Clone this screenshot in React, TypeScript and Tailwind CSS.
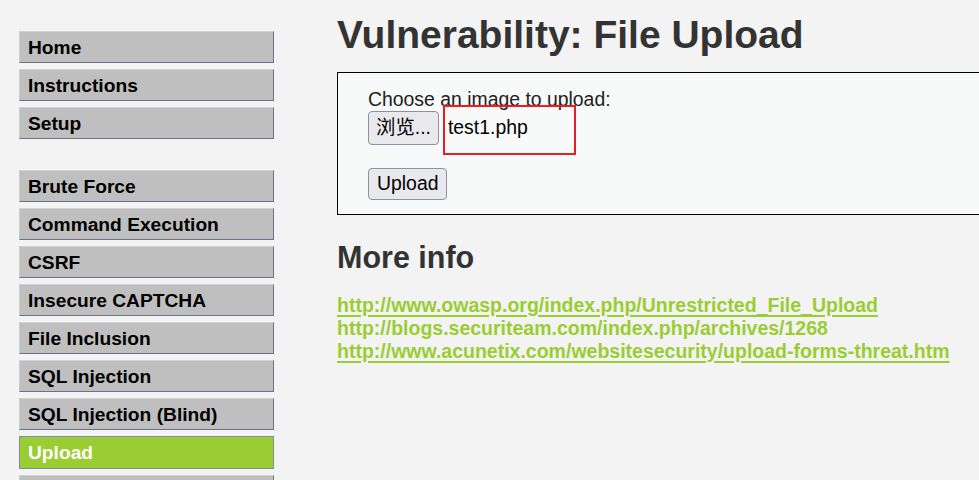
const groupOne = ["Home", "Instructions", "Setup"]
const groupTwo = [
  "Brute Force",
  "Command Execution",
  "CSRF",
  "Insecure CAPTCHA",
  "File Inclusion",
  "SQL Injection",
  "SQL Injection (Blind)",
  "Upload",
  "",
]

function MenuItem({ label, active }: { label: string; active?: boolean }) {
  if (active) {
    return (
      <div className="h-[33px] flex items-center pl-[8px] pt-[1px] border border-[#7f8ca6] bg-[#9acd32] text-white font-bold text-[19.2px] shrink-0">
        {label}
      </div>
    )
  }
  return (
    <div className="h-[32px] flex items-center pl-[8px] pt-[2px] border-t border-l border-t-[#d2d2d2] border-l-[#cacaca] border-b border-r border-b-[#6b7282] border-r-[#6b7282] bg-[#bfbfbf] text-black font-bold text-[19.2px] shrink-0">
      {label}
    </div>
  )
}

export default function App() {
  return (
    <div className="w-screen h-screen overflow-hidden bg-[#f3f3f3] font-['Liberation_Sans',Arial,'Noto_Sans_CJK_SC',sans-serif] flex">
      {/* Sidebar */}
      <aside className="ml-[19px] mt-[31px] w-[255px] shrink-0 flex flex-col">
        <div className="flex flex-col gap-[6px]">
          {groupOne.map((l) => (
            <MenuItem key={l} label={l} />
          ))}
        </div>
        <div className="mt-[31px] flex flex-col gap-[6px]">
          {groupTwo.map((l, i) => (
            <MenuItem key={i} label={l} active={l === "Upload"} />
          ))}
        </div>
      </aside>

      {/* Main Content */}
      <main className="ml-[63px] w-[700px] shrink-0">
        <h1 className="mt-[15px] text-[39px] leading-none font-bold text-[#333333]">
          Vulnerability: File Upload
        </h1>

        <div className="mt-[18px] border border-black bg-[#f8f9f9] pt-[15px] pl-[30px] pb-[14px]">
          <div className="text-[19.4px] leading-[22px] text-[#222222]">Choose an image to upload:</div>
          <div className="relative mt-[1px] flex items-center">
            <button className="h-[34px] px-[7px] border border-[#8f8f9d] rounded-[4px] bg-[#e9e9ed] text-[19.4px] text-black">
              浏览...
            </button>
            <span className="ml-[9px] text-[19.4px] text-black">test1.php</span>
            <div className="absolute left-[75px] top-[-6px] w-[133px] h-[50px] border-2 border-[#e81e25]" />
          </div>
          <button className="mt-[23px] h-[32px] px-[8px] border border-[#8f8f9d] rounded-[4px] bg-[#e9e9ed] text-[19.4px] text-black">
            Upload
          </button>
        </div>

        <h2 className="mt-[27px] text-[30.5px] leading-none font-bold text-[#333333]">More info</h2>

        <div className="mt-[21px] flex flex-col items-start text-[19.5px] leading-[23px] font-bold text-[#9acd32]">
          <a href="#" className="underline decoration-2 underline-offset-[3px]">
            http://www.owasp.org/index.php/Unrestricted_File_Upload
          </a>
          <a href="#" className="no-underline">
            http://blogs.securiteam.com/index.php/archives/1268
          </a>
          <a href="#" className="underline decoration-2 underline-offset-[3px]">
            http://www.acunetix.com/websitesecurity/upload-forms-threat.htm
          </a>
        </div>
      </main>
    </div>
  )
}
